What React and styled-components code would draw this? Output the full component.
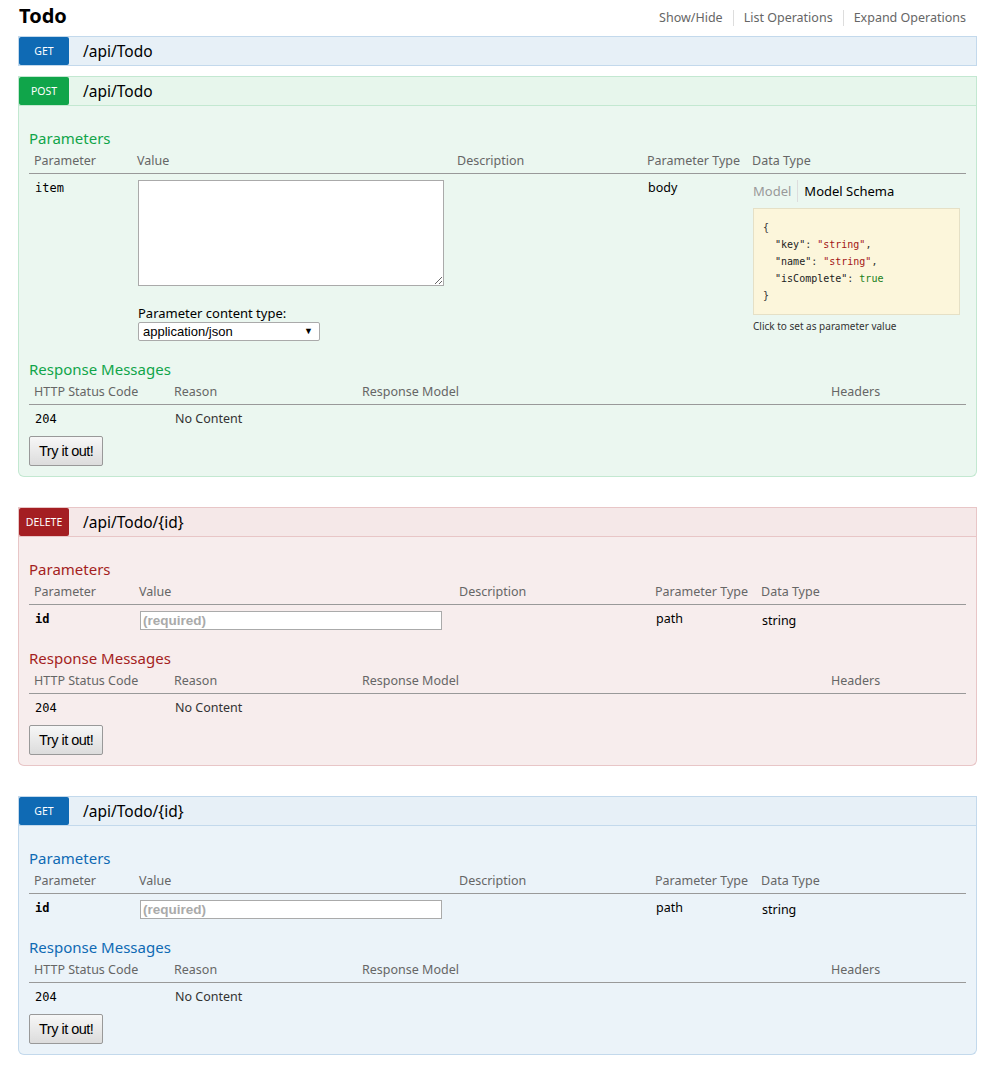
import React from 'react';
import styled, { createGlobalStyle } from 'styled-components';

const GlobalStyle = createGlobalStyle`
body {
  margin: 0;
  background: #fff;
  font-family: "Noto Sans", "Open Sans", sans-serif;
  font-size: 12.5px;
  color: #333;
}
`

const themes = {
  get: { badge: '#0f6ab4', head: '#e7f0f7', body: '#ebf3f9', border: '#c3d9ec' },
  post: { badge: '#10a54a', head: '#e7f6ec', body: '#ebf7f0', border: '#c3e8d1' },
  delete: { badge: '#a41e22', head: '#f5e8e8', body: '#f7eded', border: '#e8c6c7' },
}

const Page = styled.div`
width: 959px;
padding: 0 0 20px 18px;
`

const ResourceHead = styled.div`
display: flex;
justify-content: space-between;
height: 36px;
`

const Title = styled.h2`
margin: 0;
padding: 4px 0 0 1px;
font-size: 20px;
line-height: 24px;
font-weight: 700;
color: #000;
`

const Options = styled.ul`
list-style: none;
display: flex;
margin: 0;
padding: 10px 11px 0 0;
`

const Option = styled.li`
padding: 0 10px;
height: 16px;
line-height: 16px;
border-right: 1px solid #ddd;
color: #666;
&:last-child {
  border-right: none;
  padding-right: 0;
}
`

const Operation = styled.div`
margin-bottom: ${p => (p.$open ? '30px' : '10px')};
`

const Heading = styled.div`
display: flex;
align-items: center;
height: 28px;
background: ${p => p.$t.head};
border: 1px solid ${p => p.$t.border};
`

const Method = styled.span`
display: flex;
align-items: center;
justify-content: center;
width: 50px;
height: 28px;
border-radius: 2px;
background: ${p => p.$t.badge};
color: #fff;
font-size: 10.5px;
text-transform: uppercase;
`

const Path = styled.span`
margin-left: 14px;
font-size: 15.5px;
color: #000;
`

const Content = styled.div`
background: ${p => p.$t.body};
border: 1px solid ${p => p.$t.border};
border-top: none;
border-radius: 0 0 6px 6px;
padding: 10px;
`

const SectionTitle = styled.h4`
margin: 0;
padding: 12px 0 4px;
font-size: 15px;
line-height: 20px;
font-weight: 400;
color: ${p => p.$t.badge};
`

const HeadRow = styled.div`
display: grid;
grid-template-columns: ${p => p.$cols};
border-bottom: 1px solid #999;
`

const HeadCell = styled.div`
padding: 0 5px 3px;
line-height: 18px;
white-space: nowrap;
color: #666;
`

const Row = styled.div`
display: grid;
grid-template-columns: ${p => p.$cols};
`

const Cell = styled.div`
padding: ${p => (p.$low ? '8px 6px 4px' : '6px')};
line-height: 16px;
white-space: nowrap;
color: ${p => (p.$dark ? '#000' : '#333')};
`

const CodeCell = styled(Cell)`
font-family: "DejaVu Sans Mono", "Liberation Mono", monospace;
font-size: 12px;
font-weight: ${p => (p.$required ? 700 : 400)};
color: #000;
`

const TextArea = styled.textarea`
display: block;
box-sizing: border-box;
width: 306px;
height: 106px;
margin: 0;
border: 1px solid #aaa;
background: #fff;
`

const ContentTypeLabel = styled.div`
margin-top: 18px;
line-height: 18px;
font-size: 13px;
color: #000;
`

const SelectWrap = styled.div`
position: relative;
width: 182px;
`

const Select = styled.select`
appearance: none;
box-sizing: border-box;
width: 182px;
height: 19px;
margin: 0;
padding: 0 0 0 4px;
border: 1px solid #aaa;
border-radius: 2px;
background: #fff;
font-family: "Liberation Sans", Arial, sans-serif;
font-size: 13px;
color: #000;
`

const Arrow = styled.span`
position: absolute;
right: 7px;
top: 3px;
font-size: 9px;
line-height: 12px;
color: #000;
pointer-events: none;
`

const ValueInput = styled.input`
box-sizing: border-box;
width: 302px;
height: 19px;
margin: 0;
padding: 0 2px;
border: 1px solid #aaa;
background: #fff;
font-family: "Liberation Sans", Arial, sans-serif;
font-size: 13.5px;
&::placeholder {
  color: #aaa;
  font-weight: 700;
}
`

const Tabs = styled.div`
display: flex;
line-height: 22px;
font-size: 13px;
`

const Tab = styled.span`
padding: ${p => (p.$first ? '0 6px 0 0' : '0 0 0 6px')};
border-right: ${p => (p.$first ? '1px solid #ddd' : 'none')};
color: ${p => (p.$selected ? '#000' : '#999')};
`

const SchemaBox = styled.pre`
margin: 6px 0 0;
padding: 10px 9px;
background: #fcf6db;
border: 1px solid #e5e0c6;
font-family: "DejaVu Sans Mono", "Liberation Mono", monospace;
font-size: 10px;
line-height: 17px;
color: #333;
`

const Key = styled.span`color: #222;`
const Str = styled.span`color: #a31515;`
const Lit = styled.span`color: #1a7f1a;`

const Hint = styled.div`
margin-top: 4px;
font-size: 10px;
line-height: 14px;
color: #333;
`

const TryButton = styled.button`
display: block;
margin-top: 3px;
height: 30px;
padding: 0 9px;
border: 1px solid #999;
border-radius: 2px;
background: linear-gradient(#f7f7f7, #dcdcdc);
font-family: "Liberation Sans", Arial, sans-serif;
font-size: 14.5px;
letter-spacing: -0.5px;
color: #000;
`

const respCols = '140px 188px 469px 1fr'

const Responses = ({ t }) => (
  <>
    <SectionTitle $t={t}>Response Messages</SectionTitle>
    <HeadRow $cols={respCols}>
      <HeadCell>HTTP Status Code</HeadCell>
      <HeadCell>Reason</HeadCell>
      <HeadCell>Response Model</HeadCell>
      <HeadCell>Headers</HeadCell>
    </HeadRow>
    <Row $cols={respCols}>
      <CodeCell>204</CodeCell>
      <Cell>No Content</Cell>
      <Cell />
      <Cell />
    </Row>
    <TryButton>Try it out!</TryButton>
  </>
)

const ParamHead = ({ cols }) => (
  <HeadRow $cols={cols}>
    <HeadCell>Parameter</HeadCell>
    <HeadCell>Value</HeadCell>
    <HeadCell>Description</HeadCell>
    <HeadCell>Parameter Type</HeadCell>
    <HeadCell>Data Type</HeadCell>
  </HeadRow>
)

const Collapsed = ({ method, path }) => (
  <Operation>
    <Heading $t={themes[method]}>
      <Method $t={themes[method]}>{method}</Method>
      <Path>{path}</Path>
    </Heading>
  </Operation>
)

const IdOperation = ({ method, path }) => {
  const t = themes[method]
  const cols = '105px 320px 196px 106px 1fr'
  return (
    <Operation $open>
      <Heading $t={t}>
        <Method $t={t}>{method}</Method>
        <Path>{path}</Path>
      </Heading>
      <Content $t={t}>
        <SectionTitle $t={t}>Parameters</SectionTitle>
        <ParamHead cols={cols} />
        <Row $cols={cols}>
          <CodeCell $required>id</CodeCell>
          <Cell><ValueInput placeholder="(required)" /></Cell>
          <Cell />
          <Cell $dark>path</Cell>
          <Cell $dark $low>string</Cell>
        </Row>
        <Responses t={t} />
      </Content>
    </Operation>
  )
}

const PostOperation = () => {
  const t = themes.post
  const cols = '103px 320px 190px 105px 1fr'
  return (
    <Operation $open>
      <Heading $t={t}>
        <Method $t={t}>post</Method>
        <Path>/api/Todo</Path>
      </Heading>
      <Content $t={t}>
        <SectionTitle $t={t}>Parameters</SectionTitle>
        <ParamHead cols={cols} />
        <Row $cols={cols}>
          <CodeCell>item</CodeCell>
          <Cell>
            <TextArea />
            <ContentTypeLabel>Parameter content type:</ContentTypeLabel>
            <SelectWrap>
              <Select defaultValue="application/json">
                <option>application/json</option>
              </Select>
              <Arrow>▼</Arrow>
            </SelectWrap>
          </Cell>
          <Cell />
          <Cell $dark>body</Cell>
          <Cell>
            <Tabs>
              <Tab $first>Model</Tab>
              <Tab $selected>Model Schema</Tab>
            </Tabs>
            <SchemaBox>
{'{\n  '}<Key>"key"</Key>{': '}<Str>"string"</Str>{',\n  '}<Key>"name"</Key>{': '}<Str>"string"</Str>{',\n  '}<Key>"isComplete"</Key>{': '}<Lit>true</Lit>{'\n}'}
            </SchemaBox>
            <Hint>Click to set as parameter value</Hint>
          </Cell>
        </Row>
        <Responses t={t} />
      </Content>
    </Operation>
  )
}

const App = () => (
  <Page>
    <GlobalStyle />
    <ResourceHead>
      <Title>Todo</Title>
      <Options>
        <Option>Show/Hide</Option>
        <Option>List Operations</Option>
        <Option>Expand Operations</Option>
      </Options>
    </ResourceHead>
    <Collapsed method="get" path="/api/Todo" />
    <PostOperation />
    <IdOperation method="delete" path="/api/Todo/{id}" />
    <IdOperation method="get" path="/api/Todo/{id}" />
  </Page>
)

export default App
